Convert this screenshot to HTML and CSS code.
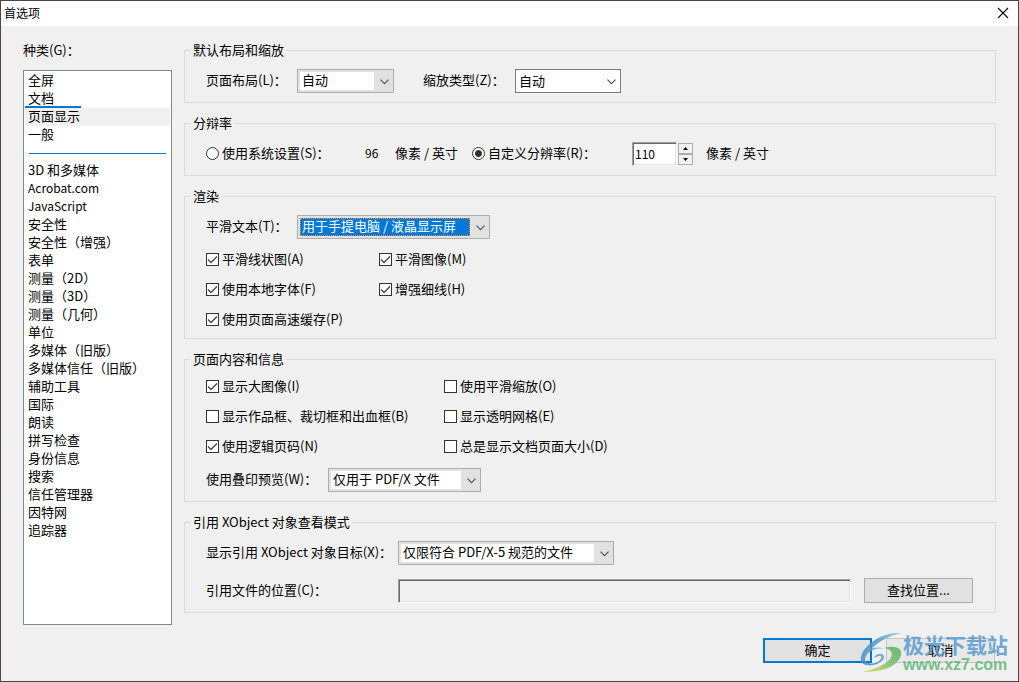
FILE: index.html
```html
<!DOCTYPE html>
<html lang="zh-CN">
<head>
<meta charset="utf-8">
<title>首选项</title>
<link rel="stylesheet" href="styles.css">
</head>
<body>
<svg class="defs" aria-hidden="true">
  <symbol id="chevron" viewBox="0 0 9 6"><path d="M.5 .7 4.5 4.7 8.5 .7" fill="none" stroke="#555" stroke-width="1.2"/></symbol>
</svg>
<div class="dialog">
  <header class="titlebar">
    <h1 class="title">首选项</h1>
    <button class="close" type="button" aria-label="关闭"><svg width="12" height="12" viewBox="0 0 12 12"><path d="M1 1 11 11M11 1 1 11" stroke="#000" stroke-width="1.1"/></svg></button>
  </header>

  <main class="content">
    <nav class="sidebar" aria-labelledby="cat-label">
      <span class="sidebar-label" id="cat-label">种类(G)：</span>
      <ul class="list">
        <li><button type="button" class="item">全屏</button></li>
        <li><button type="button" class="item item-marked">文档</button></li>
        <li><button type="button" class="item item-selected">页面显示</button></li>
        <li><button type="button" class="item">一般</button></li>
        <li class="separator" role="separator"></li>
        <li><button type="button" class="item">3D 和多媒体</button></li>
        <li><button type="button" class="item latin">Acrobat.com</button></li>
        <li><button type="button" class="item latin">JavaScript</button></li>
        <li><button type="button" class="item">安全性</button></li>
        <li><button type="button" class="item">安全性（增强）</button></li>
        <li><button type="button" class="item">表单</button></li>
        <li><button type="button" class="item">测量（2D）</button></li>
        <li><button type="button" class="item">测量（3D）</button></li>
        <li><button type="button" class="item">测量（几何）</button></li>
        <li><button type="button" class="item">单位</button></li>
        <li><button type="button" class="item">多媒体（旧版）</button></li>
        <li><button type="button" class="item">多媒体信任（旧版）</button></li>
        <li><button type="button" class="item">辅助工具</button></li>
        <li><button type="button" class="item">国际</button></li>
        <li><button type="button" class="item">朗读</button></li>
        <li><button type="button" class="item">拼写检查</button></li>
        <li><button type="button" class="item">身份信息</button></li>
        <li><button type="button" class="item">搜索</button></li>
        <li><button type="button" class="item">信任管理器</button></li>
        <li><button type="button" class="item">因特网</button></li>
        <li><button type="button" class="item">追踪器</button></li>
      </ul>
    </nav>

    <form class="panel" id="prefs">
      <fieldset class="group">
        <legend>默认布局和缩放</legend>
        <div class="row row-layout">
          <label for="layout">页面布局(L)：</label>
          <span class="combo combo-s"><select id="layout"><option>自动</option></select><svg><use href="#chevron"/></svg></span>
          <label for="zoomtype">缩放类型(Z)：</label>
          <span class="combo combo-m combo-edit"><select id="zoomtype"><option>自动</option></select><svg><use href="#chevron"/></svg></span>
        </div>
      </fieldset>

      <fieldset class="group">
        <legend>分辩率</legend>
        <div class="row row-resolution">
          <label class="option"><input type="radio" name="res">使用系统设置(S)：</label>
          <span class="text latin">96</span>
          <span class="text">像素 / 英寸</span>
          <label class="option"><input type="radio" name="res" checked>自定义分辨率(R)：</label>
          <span class="spinner">
            <input class="field latin" type="text" value="110" aria-label="自定义分辨率">
            <span class="steps">
              <button type="button" aria-label="增加"><svg width="5" height="3" viewBox="0 0 5 3"><path d="M0 3 2.500 0 5 3z"/></svg></button>
              <button type="button" aria-label="减少"><svg width="5" height="3" viewBox="0 0 5 3"><path d="M0 0 2.500 3 5 0z"/></svg></button>
            </span>
          </span>
          <span class="text">像素 / 英寸</span>
        </div>
      </fieldset>

      <fieldset class="group group-checks-last">
        <legend>渲染</legend>
        <div class="row row-smooth">
          <label for="smooth">平滑文本(T)：</label>
          <span class="combo combo-l combo-focus"><select id="smooth"><option>用于手提电脑 / 液晶显示屏</option></select><svg><use href="#chevron"/></svg></span>
        </div>
        <div class="checks checks-narrow">
          <label class="option"><input type="checkbox" checked>平滑线状图(A)</label>
          <label class="option"><input type="checkbox" checked>平滑图像(M)</label>
          <label class="option"><input type="checkbox" checked>使用本地字体(F)</label>
          <label class="option"><input type="checkbox" checked>增强细线(H)</label>
          <label class="option"><input type="checkbox" checked>使用页面高速缓存(P)</label>
        </div>
      </fieldset>

      <fieldset class="group group-checks-first">
        <legend>页面内容和信息</legend>
        <div class="checks checks-wide">
          <label class="option"><input type="checkbox" checked>显示大图像(I)</label>
          <label class="option"><input type="checkbox">使用平滑缩放(O)</label>
          <label class="option"><input type="checkbox">显示作品框、裁切框和出血框(B)</label>
          <label class="option"><input type="checkbox">显示透明网格(E)</label>
          <label class="option"><input type="checkbox" checked>使用逻辑页码(N)</label>
          <label class="option"><input type="checkbox">总是显示文档页面大小(D)</label>
        </div>
        <div class="row row-overprint">
          <label for="overprint">使用叠印预览(W)：</label>
          <span class="combo combo-p"><select id="overprint"><option>仅用于 PDF/X 文件</option></select><svg><use href="#chevron"/></svg></span>
        </div>
      </fieldset>

      <fieldset class="group">
        <legend>引用 XObject 对象查看模式</legend>
        <div class="row row-xobject">
          <label for="target">显示引用 XObject 对象目标(X)：</label>
          <span class="combo combo-x"><select id="target"><option>仅限符合 PDF/X-5 规范的文件</option></select><svg><use href="#chevron"/></svg></span>
        </div>
        <div class="row row-location">
          <label for="location">引用文件的位置(C)：</label>
          <input class="field field-readonly" id="location" type="text" readonly>
          <button class="button" type="button">查找位置...</button>
        </div>
      </fieldset>
    </form>
  </main>

  <footer class="actions">
    <button class="button button-default" type="submit" form="prefs">确定</button>
    <button class="button button-cancel" type="button">取消</button>
    <div class="watermark">
      <svg class="logo" width="46" height="42" viewBox="0 0 46 42">
        <defs>
          <linearGradient id="blue" x1="0" y1="1" x2="1" y2="0"><stop offset="0" stop-color="#4f86c6"/><stop offset=".6" stop-color="#4d9bd0"/><stop offset="1" stop-color="#8cc9e0"/></linearGradient>
          <linearGradient id="green" x1="0" y1="1" x2="1" y2="0"><stop offset="0" stop-color="#e2dc50"/><stop offset=".5" stop-color="#7cc06a"/><stop offset="1" stop-color="#4fae62"/></linearGradient>
        </defs>
        <path d="M42 1C26 0 12 7 4 18-1 26 0 31 6 33 3 27 6 21 12 16 21 8 31 3 42 1z" fill="url(#blue)"/>
        <path d="M24 17C16 15 7 19 5 26 4 32 13 33 19 29 24 25 21 22 14 26 16 19 28 21 23 28 17 35 3 35 1 29 0 20 13 12 24 17z" fill="url(#blue)"/>
        <path d="M24 16C33 13 43 15 41 23 38 34 24 40 3 40 14 37 25 33 30 27 34 21 31 17 24 16z" fill="url(#green)"/>
      </svg>
      <div class="watermark-text"><span class="watermark-name">极光下载站</span><span class="watermark-url">www.xz7.com</span></div>
    </div>
  </footer>
</div>
</body>
</html>
```
FILE: styles.css
```css
* { box-sizing: border-box; }

body {
  margin: 0;
  color: #000;
  font: 13px/18px "Noto Sans CJK SC", sans-serif;
}

button, input, select { font: inherit; color: inherit; }

.defs { position: absolute; width: 0; height: 0; }

.dialog {
  display: flex;
  flex-direction: column;
  min-height: 100vh;
  border: 1px solid #4a4448;
  background: #f0f0f0;
}

.titlebar {
  display: flex;
  align-items: center;
  justify-content: space-between;
  height: 25px;
  padding: 0 9px 1px 3px;
  background: #fff;
}

.title { margin: 0; font-size: 12px; font-weight: 400; line-height: 16px; }

.close {
  display: flex;
  padding: 0;
  border: 0;
  background: none;
}

.content {
  display: grid;
  flex: 1;
  grid-template-columns: 149px 1fr;
  gap: 12px;
  padding: 15px 22px 0;
}

.sidebar { display: flex; flex-direction: column; gap: 11px; }

.list {
  flex: 1;
  margin: 0;
  padding: 1px;
  border: 1px solid #828790;
  background: #fff;
  list-style: none;
}

.item {
  display: block;
  width: 100%;
  height: 18px;
  padding: 0 3px 2px;
  border: 0;
  background: none;
  line-height: 16px;
  text-align: left;
  white-space: nowrap;
}

.item-marked {
  width: 56px;
  padding-bottom: 0;
  border-bottom: 2px solid #0078d7;
}

.item-selected { background: #f0f0f0; }

.latin { font-size: 12px; }

.separator {
  height: 1px;
  margin: 9px 4px 8px;
  background: #0078d7;
}

.panel { display: flex; flex-direction: column; gap: 11px; }

.group {
  min-width: 0;
  margin: 0;
  padding: 10px 22px 9px 21px;
  border: 1px solid #dcdcdc;
}

.group legend {
  margin-left: -15px;
  padding: 0 2px;
}

.group-checks-last { padding-bottom: 4px; }
.group-checks-first { padding-top: 3px; }

.row { display: grid; align-items: center; white-space: nowrap; }
.row > label, .row > .text { padding-bottom: 2px; }
.row-layout { grid-template-columns: 91px 126px 92px auto; justify-content: start; }
.row-resolution { grid-template-columns: 159px 30px 77px 160px 74px auto; justify-content: start; }
.row-smooth { grid-template-columns: 91px 1fr; }
.row-overprint { grid-template-columns: 122px 1fr; margin-top: 7px; }
.row-xobject { grid-template-columns: 192px 1fr; }
.row-location { grid-template-columns: 192px 1fr 122px; margin-top: 13px; }
.row-location .button { margin-left: 13px; }

.checks { display: grid; }
.row + .checks { margin-top: 5px; }
.checks-narrow { grid-template-columns: 173px 1fr; }
.checks-wide { grid-template-columns: 238px 1fr; }

.option {
  display: flex;
  align-items: center;
  gap: 3px;
  white-space: nowrap;
}

.checks .option { height: 30px; }

.option input {
  appearance: none;
  flex: none;
  width: 13px;
  height: 13px;
  margin: 0;
  border: 1px solid #333;
  background: #fff;
}

.option input[type="checkbox"]:checked {
  background: #fff url("data:image/svg+xml,%3Csvg xmlns='http://www.w3.org/2000/svg' viewBox='0 0 11 11'%3E%3Cpath d='M1 5.500 4 8.500 10 2.500' fill='none' stroke='%23444' stroke-width='1.3'/%3E%3C/svg%3E") center / 11px 11px;
}

.option input[type="radio"] { border-radius: 50%; }

.option input[type="radio"]:checked {
  background: radial-gradient(circle, #333 3px, #fff 4px);
}

.combo { position: relative; display: block; height: 24px; }
.combo-s { width: 97px; }
.combo-m { width: 106px; }
.combo-l { width: 193px; }
.combo-p { width: 153px; }
.combo-x { width: 216px; }

.combo select {
  appearance: none;
  display: block;
  width: 100%;
  height: 100%;
  padding: 0 20px 2px 4px;
  border: 1px solid #adadad;
  border-radius: 0;
  outline: 0;
  background: linear-gradient(#fff, #fff) 2px 2px / calc(100% - 21px) 18px no-repeat #e1e1e1;
}

.combo svg {
  position: absolute;
  top: 10px;
  right: 5px;
  width: 9px;
  height: 6px;
  pointer-events: none;
}

.combo .wide { padding-left: 4px; }

.combo-edit select {
  padding: 0 20px 1px 3px;
  border-color: #7a7a7a;
  background: #fff;
}

.combo-focus::before {
  content: "";
  position: absolute;
  top: 3px;
  right: 20px;
  bottom: 3px;
  left: 3px;
  border: 1px dotted #ff8728;
  pointer-events: none;
}

.combo-focus select {
  color: #fff;
  background-image: linear-gradient(#0078d7, #0078d7);
}

.combo-focus option { color: #000; }

.field {
  min-width: 0;
  height: 24px;
  padding: 0 2px 2px;
  border: 1px solid;
  border-color: #a0a0a0 #fff #fff #a0a0a0;
  border-radius: 0;
  outline: 0;
  background: #fff;
  box-shadow: inset 1px 1px #696969, inset -1px -1px #e3e3e3;
}

.field-readonly { background: #f0f0f0; }

.spinner { display: flex; align-items: center; gap: 1px; }
.spinner .field { width: 45px; }

.steps { display: flex; flex-direction: column; }

.steps button {
  display: flex;
  align-items: center;
  justify-content: center;
  width: 15px;
  height: 11px;
  padding: 0;
  border: 1px solid #adadad;
  background: #f0f0f0;
}

.button {
  width: 109px;
  height: 25px;
  padding: 0 0 2px;
  border: 1px solid #adadad;
  background: #e1e1e1;
}

.button-default { border: 2px solid #0078d7; }

.button-cancel { border-color: #c4c4c4; background: #e8e8e8; }

.actions {
  position: relative;
  display: flex;
  justify-content: flex-end;
  gap: 14px;
  padding: 13px 23px 18px;
}

.watermark {
  position: absolute;
  right: 10px;
  bottom: 7px;
  display: flex;
  align-items: center;
  opacity: .85;
  pointer-events: none;
}

.logo { margin-right: -3px; }

.watermark-text { display: flex; flex-direction: column; white-space: nowrap; }

.watermark-name {
  color: #5b9bd0;
  font-size: 21px;
  font-weight: 700;
  line-height: 24px;
}

.watermark-url {
  color: #62b878;
  font: 700 16px/18px "Liberation Sans", sans-serif;
}
```
